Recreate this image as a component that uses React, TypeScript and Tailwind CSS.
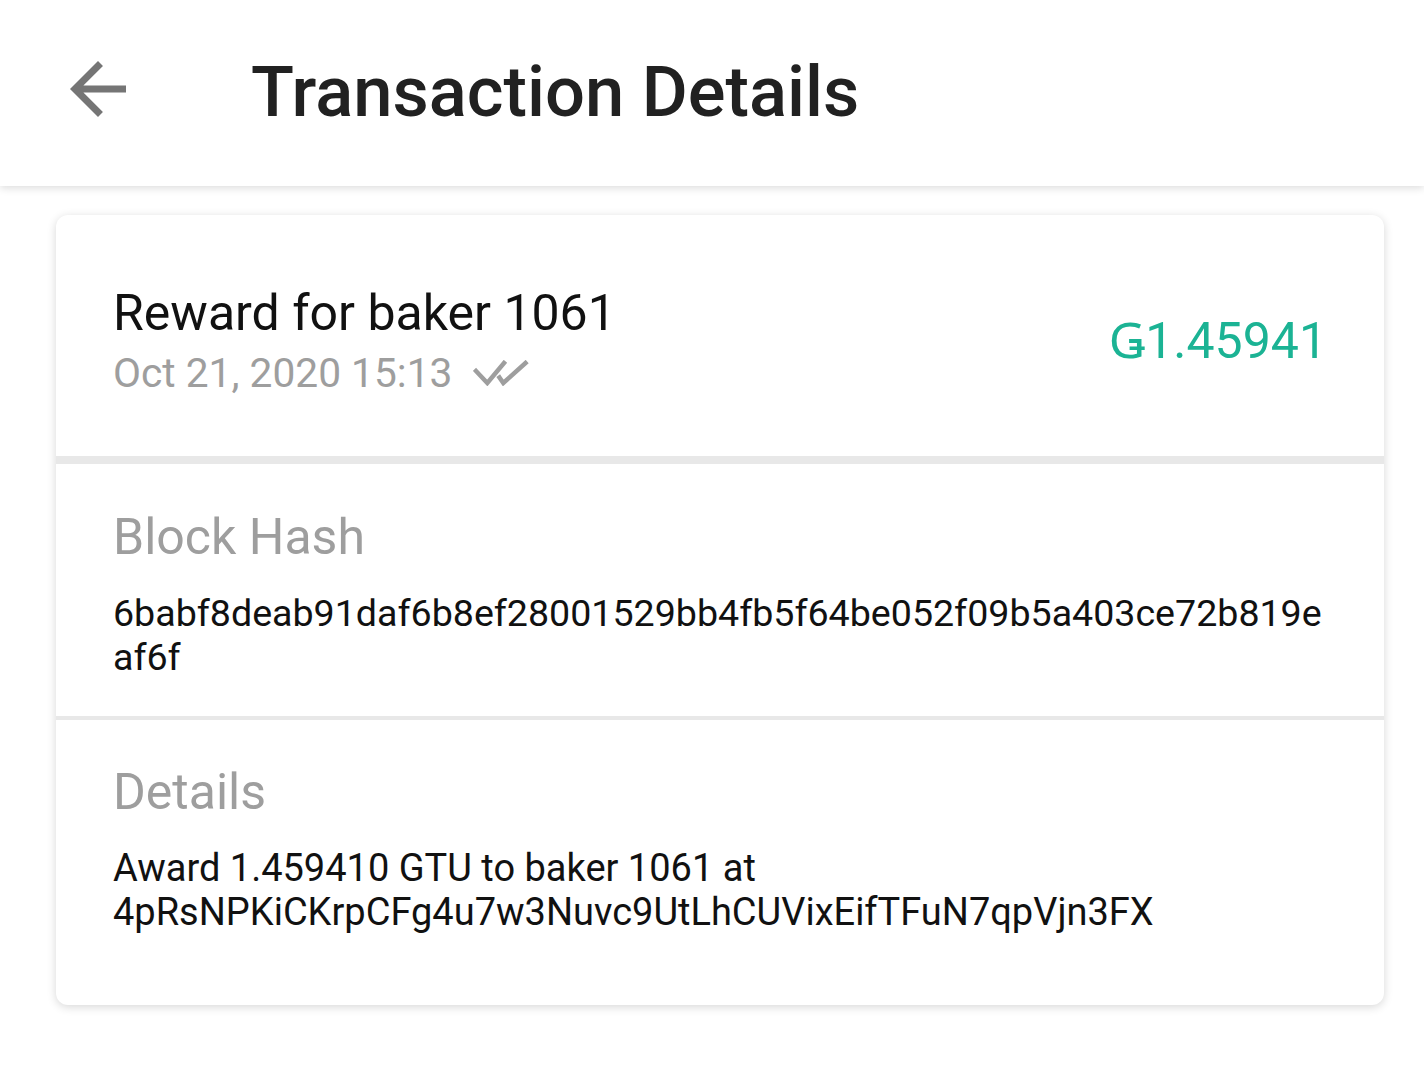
import React from 'react';

const BackArrow = () => (
  <svg width="84" height="84" viewBox="0 0 24 24" fill="#757575" className="mb-[8px]">
    <path d="M20 11H7.83l5.59-5.59L12 4l-8 8 8 8 1.41-1.41L7.83 13H20v-2z" />
  </svg>
);

const DoubleCheck = () => (
  <svg width="56" height="26" viewBox="0 0 56 26" fill="none" stroke="#9e9e9e" strokeWidth="4.5" strokeLinecap="square">
    <polyline points="3,11 14.3,23 31,3" />
    <polyline points="26.5,17.5 30.3,23 52.5,3" />
  </svg>
);

const Section: React.FC<{ label: string; children: React.ReactNode; className?: string }> = ({ label, children, className }) => (
  <div className={`px-[57px] ${className ?? ''}`}>
    <div className="text-[50px] leading-[58px] text-[#9e9e9e]">{label}</div>
    <div className="mt-[25px] text-[38px] leading-[44px] text-[#111111]">{children}</div>
  </div>
);

export default function App() {
  return (
    <div className="min-h-screen bg-white" style={{ fontFamily: 'Roboto, "Noto Sans", sans-serif' }}>
      {/* Top bar */}
      <header className="relative z-10 h-[186px] bg-white flex items-center pl-[56px] gap-[111px] shadow-[0_2px_8px_rgba(0,0,0,0.14)]">
        <BackArrow />
        <h1 className="text-[70.5px] leading-[70px] font-medium text-[#212121] pb-[3px]">Transaction Details</h1>
      </header>

      <div className="pl-[56px] pr-[40px] pt-[29px]">
        <div className="bg-white rounded-[12px] shadow-[0_2px_10px_rgba(0,0,0,0.16)] overflow-hidden">
          {/* Summary */}
          <div className="pl-[57px] pr-[57px] pt-[69px] pb-[58px] flex items-center justify-between">
            <div>
              <div className="text-[50px] leading-[58px] text-[#111111]">Reward for baker 1061</div>
              <div className="mt-[6px] flex items-center gap-[21px] text-[40.7px] leading-[50px] text-[#9e9e9e]">
                <span>Oct 21, 2020 15:13</span>
                <DoubleCheck />
              </div>
            </div>
            <div className="text-[50px] leading-[58px] text-[#1bb394]">Ǥ1.45941</div>
          </div>

          <div className="h-[8px] bg-[#e8e8e8]" />

          <Section label="Block Hash" className="pt-[44px] pb-[37px]">
            <span className="break-all text-[37.6px]">6babf8deab91daf6b8ef28001529bb4fb5f64be052f09b5a403ce72b819eaf6f</span>
          </Section>

          <div className="h-[4px] bg-[#e8e8e8]" />

          <Section label="Details" className="pt-[43px] pb-[71px]">
            <span className="break-words">Award 1.459410 GTU to baker 1061 at 4pRsNPKiCKrpCFg4u7w3Nuvc9UtLhCUVixEifTFuN7qpVjn3FX</span>
          </Section>
        </div>
      </div>
    </div>
  );
}
